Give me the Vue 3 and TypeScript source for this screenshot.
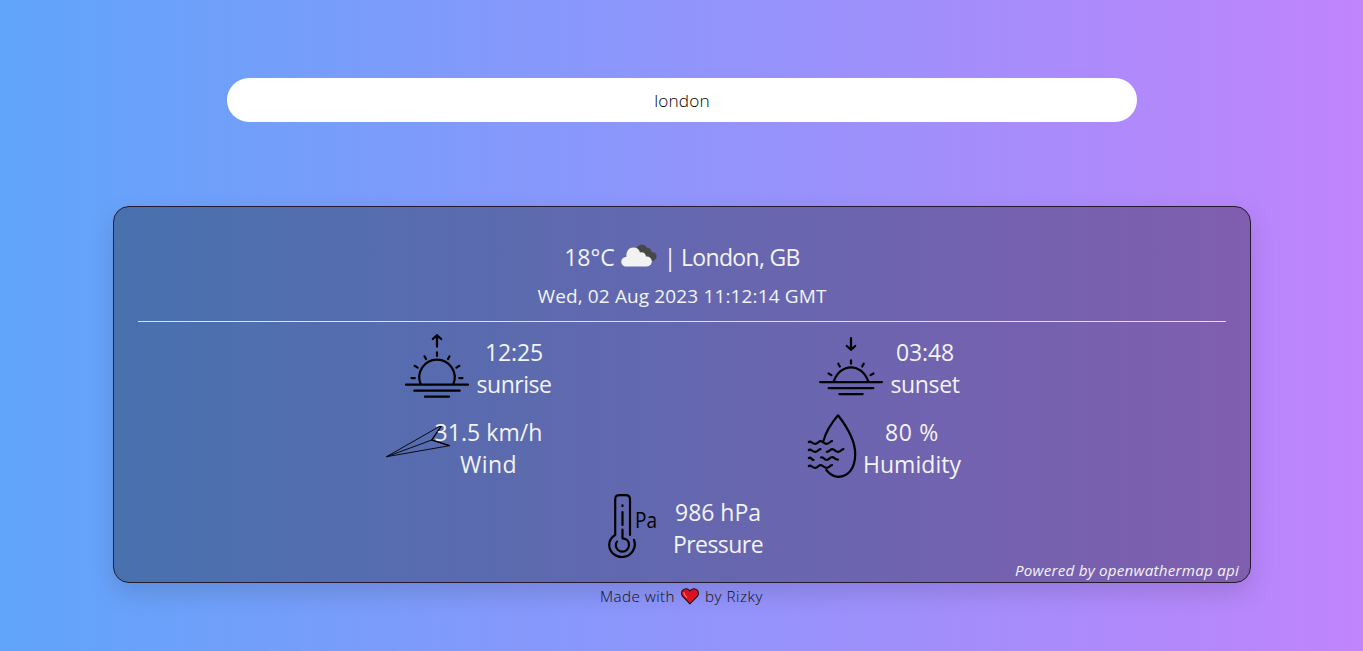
<script setup lang="ts">
import { ref, type Directive } from 'vue'

const query = ref('london')

// Tracks a line of text so that it fills the given width in pixels.
const fit = (el: HTMLElement, width: number) => {
  el.style.letterSpacing = '0px'
  const natural = el.getBoundingClientRect().width
  const count = (el.textContent ?? '').length
  if (count > 0) el.style.letterSpacing = `${(width - natural) / count}px`
}
const vFit: Directive<HTMLElement, number> = {
  mounted: (el, binding) => fit(el, binding.value),
}
</script>

<template>
  <main class="page">
    <input v-model="query" class="search" type="text" aria-label="City" />
    <section class="card">
      <h1 class="now">
        <span v-fit="50.5">18°C</span>
        <svg class="cloud" width="36" height="24" viewBox="0 0 36 24">
          <path fill="#484848" d="M15 6C15 3 18 0.5 21 0.7C23.5 0.5 25.5 2 26.3 4C28.8 3.8 30.3 5.5 30.5 8C33.5 8 35.6 9.7 35.6 12.3C35.6 15 33.8 17 31 17L22 13Z" />
          <path fill="#f2f2f2" d="M5.5 22.5C2.2 22.5 0.3 20.3 0.3 17.7C0.3 15 2.5 12.8 5.4 12.9C5 7.2 8 3.6 12.3 3.6C16 3.6 18.2 5.5 19 8.4C22.3 7.6 24.7 9.6 25 12.4C28.5 12.2 30.8 14.3 30.8 17.3C30.8 20.4 28.7 22.5 25.7 22.5Z" />
        </svg>
        <span v-fit="136">| London, GB</span>
      </h1>
      <p class="date"><span v-fit="289">Wed, 02 Aug 2023 11:12:14 GMT</span></p>
      <div class="row first">
        <div class="item">
          <svg class="icon line" viewBox="0 0 64 64">
            <path d="M1 50.7H63M9.3 56.7H54.7M20 62.7H44M15.8 50.5A17.7 17.7 0 1 1 48.2 50.5M32 1.2V12.7M27.8 5L32 1.2L36.2 5M32 18.4V22M19.5 22.3L21 25.1M44.5 22.3L43 25.1M9.6 31.8L12.6 33.6M54.4 31.8L51.4 33.6M6.5 44.1H9.8M54.2 44.1H57.5" />
          </svg>
          <p class="reading sunrise"><span v-fit="58">12:25</span><span v-fit="75">sunrise</span></p>
        </div>
        <div class="item">
          <svg class="icon line" viewBox="0 0 64 64">
            <path d="M1 48.1H63M9.6 54.1H54.4M20.3 60.1H43.7M14.7 47.7C21 28.6 43 28.6 49.3 47.7M32 4.2V15.8M27.8 12L32 15.8L36.2 12M32 26.3V29.7M19.3 29.7L20.8 32.6M44.7 29.7L43.2 32.6M9.5 39.5L12.5 41.1M54.5 39.5L51.5 41.1" />
          </svg>
          <p class="reading sunset"><span v-fit="58">03:48</span><span v-fit="69">sunset</span></p>
        </div>
      </div>
      <div class="row second">
        <div class="item">
          <svg class="icon wind" viewBox="0 0 64 64">
            <path d="M0.5 40.7L56 9L45.8 24L63.5 29.7ZM0.5 40.7L45.8 24" />
            <path class="bold" d="M56 9L45.8 24L63.5 29.7" />
          </svg>
          <p class="reading speed"><span v-fit="108">31.5 km/h</span><span v-fit="57">Wind</span></p>
        </div>
        <div class="item tight">
          <svg class="icon line" viewBox="0 0 64 64">
            <path d="M23.5 26.7C25.7 18.5 32.8 7.5 38 1.3C46.8 12.5 55.2 27 55.2 40C55.2 54 48.5 62.8 38.3 62.8C33.2 62.8 29.3 59.7 26.3 56" />
            <path d="M8.8 28C11 26.5 12.3 29.9 15 29.9C18 29.9 18.4 27.2 20.7 27.2C23 27.2 24 29.9 26.5 29.9C29.2 29.9 29.7 27.5 32 27.2M8.8 36C11 34.5 12.3 37.9 15 37.9C18 37.9 18 35.4 20.5 35.2M26.8 37.8C29.5 37.8 30.2 35.2 32.3 35.2C34.5 35.2 35.3 37.9 38 37.9C40.8 37.9 41 35.5 43.4 35.2M8.8 44C11 42.5 11.5 45.8 13.5 45.9M21 43.5C23.5 42.8 24 45.8 26.5 45.9C29.3 45.9 29.8 43.2 32 43.2C34.5 43.2 35.3 46 38 45.6M8.8 52C11 50.5 12.3 53.9 15 53.9C18 53.9 18.4 51.2 20.7 51.2C23 51.2 24 53.9 26.5 53.9C29.2 53.9 29.7 51.5 32 51.2" />
          </svg>
          <p class="reading humidity"><span v-fit="54">80 %</span><span v-fit="98">Humidity</span></p>
        </div>
      </div>
      <div class="row third">
        <div class="item">
          <svg class="icon line" viewBox="0 0 64 64">
            <path d="M28 41V5.5Q28 1.2 23.5 1.2H17.5Q13.2 1.2 13.2 5.5V41C5.5 45.5 5.8 54.5 11 59.6C16.5 64.4 24.5 64 29 59.3C33.3 54.6 33.5 50 32 45.8M20.5 11.4V12.1M20.5 18V31M20.5 35.7V44.3Q27 44.7 27 51A6.6 6.6 0 0 1 13.8 51Q13.8 49 15 47.6" />
            <text class="unit" x="33" y="33.6" textLength="22" lengthAdjust="spacingAndGlyphs">Pa</text>
          </svg>
          <p class="reading pressure"><span v-fit="86">986 hPa</span><span v-fit="90">Pressure</span></p>
        </div>
      </div>
      <em class="powered"><span v-fit="224">Powered by openwathermap api</span></em>
    </section>
    <footer class="credit">
      <span v-fit="75">Made with</span>
      <svg width="18" height="17" viewBox="0 0 18 17">
        <path fill="#e81224" stroke="#151018" stroke-width="1.1" d="M9 15.8L1.7 8.4C0.2 6.7 0.2 3.8 1.8 2.1C3.7 0.3 6.7 0.3 8.2 2.1L9 3L9.8 2.1C11.4 0.3 14.4 0.3 16.2 2.1C17.8 3.8 17.8 6.7 16.3 8.4Z" />
        <path fill="none" stroke="#f5735e" stroke-width="1.4" stroke-linecap="round" d="M2.9 4.8C2.8 6.5 4 7.6 5.6 9.2" />
      </svg>
      <span v-fit="58">by Rizky</span>
    </footer>
  </main>
</template>

<style>
body {
  margin: 0;
}
</style>

<style scoped>
.page {
  box-sizing: border-box;
  height: 651px;
  padding: 78px 0 0;
  display: flex;
  flex-direction: column;
  align-items: center;
  overflow: hidden;
  background: linear-gradient(to right, #60a5fa, #c084fc);
  font-family: "Open Sans", "Noto Sans", sans-serif;
}
.search {
  box-sizing: border-box;
  width: 910px;
  height: 44px;
  margin: 0 0 0 1px;
  padding: 1px 0 0;
  border: 0;
  border-radius: 22px;
  outline: none;
  background: #fff;
  color: #000;
  text-align: center;
  font: 300 17.2px "Open Sans", sans-serif;
  letter-spacing: 0.15px;
}
.card {
  position: relative;
  box-sizing: border-box;
  width: 1138px;
  height: 377px;
  margin: 84px 0 0 1px;
  padding: 34px 24px 0;
  border: 1px solid #261a30;
  border-radius: 16px;
  background: rgba(49, 46, 60, 0.4);
  background: rgba(0, 0, 0, 0.3);
  box-shadow: 0 10px 26px rgba(0, 0, 0, 0.13);
  color: #f3f4f6;
}
.now {
  display: flex;
  justify-content: center;
  align-items: center;
  margin: 0;
  height: 32px;
  font-size: 23px;
  font-weight: 400;
  white-space: nowrap;
}
.cloud {
  margin: -3px 7px 0 6px;
}
.date {
  margin: 0;
  padding-top: 9px;
  height: 39px;
  border-bottom: 1px solid #dde0ee;
  text-align: center;
  font-size: 19px;
  line-height: 28px;
  white-space: nowrap;
}
.row {
  display: flex;
  height: 64px;
  margin-top: 14px;
  justify-content: center;
}
.first {
  gap: 268px;
}
.second {
  gap: 258px;
  margin: 16px 18px 0 0;
}
.third {
  margin-top: 16px;
}
.item {
  display: flex;
  gap: 8px;
}
.tight {
  gap: 0;
}
.icon {
  flex: none;
  width: 64px;
  height: 64px;
  margin-top: -2px;
  overflow: visible;
}
.first .icon,
.second .icon,
.third .icon {
  margin-top: -2px;
}
.line {
  fill: none;
  stroke: #000;
  stroke-width: 2.2;
  stroke-linecap: round;
  stroke-linejoin: round;
}
.wind {
  margin-top: 0;
  fill: none;
  stroke: #000;
  stroke-width: 0.9;
}
.second .wind {
  margin-top: 0;
}
.bold {
  stroke-width: 1.3;
}
.unit {
  fill: #000;
  stroke: none;
  font-size: 21.5px;
}
.reading {
  display: flex;
  flex-direction: column;
  align-items: center;
  margin: 0;
  font-size: 23px;
  line-height: 32px;
  white-space: nowrap;
}
.sunrise {
  width: 74px;
}
.sunset {
  width: 68px;
}
.speed {
  position: relative;
  width: 107px;
  margin-left: -23px;
}
.humidity {
  width: 96px;
}
.pressure {
  width: 88px;
}
.powered {
  position: absolute;
  right: 11px;
  bottom: 0;
  font-size: 15.2px;
  line-height: 24px;
  white-space: nowrap;
}
.powered span {
  display: inline-block;
}
.credit {
  display: flex;
  align-items: center;
  gap: 6px;
  height: 24px;
  margin-top: 1px;
  color: #111;
  font-size: 15.2px;
  font-weight: 300;
  white-space: nowrap;
}
</style>
